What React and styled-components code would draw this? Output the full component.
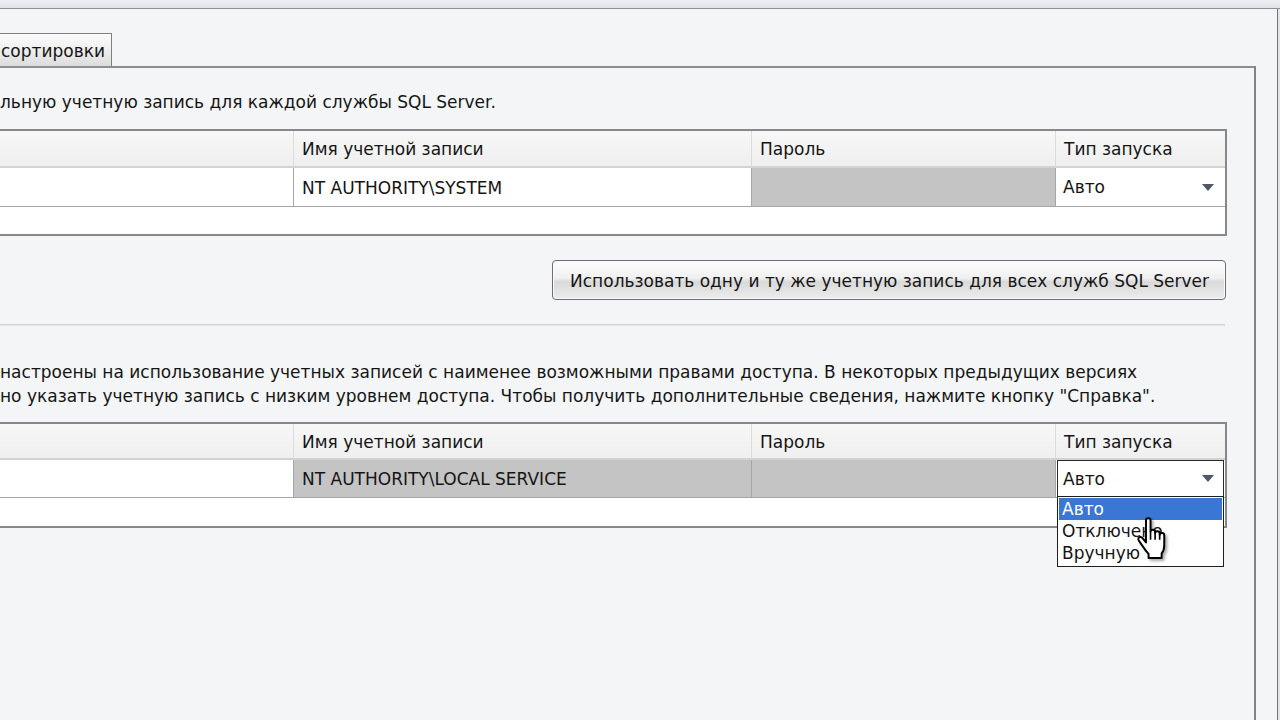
import React from "react";
import styled, { createGlobalStyle } from "styled-components";

const GlobalStyle = createGlobalStyle`
  html, body {
    margin: 0;
    padding: 0;
  }
  body {
    font-family: "DejaVu Sans", "Liberation Sans", sans-serif;
    font-size: 17px;
    color: #151515;
  }
`;

const Screen = styled.div`
  position: relative;
  width: 1280px;
  height: 720px;
  overflow: hidden;
  background: #f4f5f7;
  display: flex;
  flex-direction: column;
`;

const TopEdge = styled.div`
  flex: none;
  height: 8px;
  background: linear-gradient(#eef0f2, #dfe2e6);
  border-bottom: 1px solid #8c9197;
`;

const Body = styled.div`
  flex: 1;
  display: flex;
`;

const Dialog = styled.div`
  width: 1277px;
  border-right: 1px solid #6f747a;
  display: flex;
  flex-direction: column;
  padding-top: 24px;
`;

const Outside = styled.div`
  flex: 1;
  background: #e4e7ea;
`;

const TabStrip = styled.div`
  display: flex;
  height: 33px;
`;

const Tab = styled.div`
  width: 112px;
  box-sizing: border-box;
  display: flex;
  align-items: center;
  padding: 2px 0 0 1px;
  border: 1px solid #7d8186;
  border-left: none;
  border-bottom: none;
  background: linear-gradient(#fbfbfb 0%, #f0f0f0 45%, #dcdcdc 100%);
  white-space: nowrap;
`;

const Panel = styled.div`
  flex: 1;
  width: 1256px;
  box-sizing: border-box;
  border-top: 2px solid #8b8f94;
  border-right: 2px solid #7f8489;
  padding-right: 27px;
  display: flex;
  flex-direction: column;
`;

const Text = styled.div`
  line-height: 24px;
  white-space: nowrap;
  margin-top: ${({ $top }) => $top}px;
`;

const Table = styled.div`
  position: relative;
  margin-top: ${({ $top }) => $top}px;
  background: #fff;
  border: 2px solid #85898e;
  border-left: none;
`;

const Row = styled.div`
  display: grid;
  grid-template-columns: 294px 458px 304px 1fr;
  height: ${({ $h }) => $h}px;
`;

const HeadCell = styled.div`
  display: flex;
  align-items: center;
  padding: 1px 0 0 8px;
  background: linear-gradient(#f7f7f7, #efefef);
  border-right: 1px solid #dcdcdc;
  border-bottom: 2px solid #d2d2d2;
  white-space: nowrap;
  &:last-child {
    border-right: none;
  }
`;

const Cell = styled.div`
  position: relative;
  display: flex;
  align-items: center;
  padding-left: ${({ $pad }) => $pad ?? 8}px;
  padding-top: 1px;
  background: ${({ $gray }) => ($gray ? "#c4c4c4" : "#fff")};
  border-right: 1px solid #a6a6a6;
  border-bottom: 1px solid #a6a6a6;
  white-space: nowrap;
  &:last-child {
    border-right: none;
  }
`;

const Combo = styled.div`
  position: relative;
  flex: 1;
  align-self: stretch;
  display: flex;
  align-items: center;
  justify-content: space-between;
  padding: 0 9px 0 5px;
  margin: -1px 1px 0 1px;
  box-sizing: border-box;
  border: 1px solid ${({ $open }) => ($open ? "#2b2b2b" : "transparent")};
`;

const Arrow = styled.span`
  width: 0;
  height: 0;
  border-left: 6px solid transparent;
  border-right: 6px solid transparent;
  border-top: 7px solid #4f5864;
`;

const List = styled.div`
  position: absolute;
  top: 100%;
  left: 0;
  right: 0;
  margin: 0 -1px;
  height: 71px;
  box-sizing: border-box;
  background: #fff;
  border: 1px solid #1e1e1e;
  padding-top: 1px;
  z-index: 2;
`;

const Option = styled.div`
  height: 22px;
  line-height: 23px;
  padding-left: 3px;
  margin: 0 1px;
  background: ${({ $active }) => ($active ? "#3a77d5" : "transparent")};
  color: ${({ $active }) => ($active ? "#fff" : "#151515")};
`;

const Filler = styled.div`
  height: ${({ $h }) => $h}px;
`;

const ButtonRow = styled.div`
  display: flex;
  justify-content: flex-end;
  margin-top: 24px;
  padding-right: 1px;
`;

const Button = styled.button`
  height: 40px;
  padding: 1px 16px 0 17px;
  font: inherit;
  color: #151515;
  border: 1px solid #6b6e72;
  border-radius: 4px;
  background: linear-gradient(#fdfdfd 0%, #f0f0f0 45%, #d9d9d9 55%, #ececec 100%);
  box-shadow: inset 0 0 0 1px #fbfbfb;
`;

const Separator = styled.div`
  margin-top: 24px;
  height: 2px;
  margin-right: 2px;
  background: linear-gradient(#c9ccd0, #eef0f2);
`;

const Pointer = styled.svg`
  position: absolute;
  left: 1136px;
  top: 517px;
  width: 33px;
  height: 44px;
  filter: drop-shadow(2px 2px 1.5px rgba(0, 0, 0, 0.35));
  z-index: 5;
`;

const columns = ["", "Имя учетной записи", "Пароль", "Тип запуска"];

function AccountTable({ account, accountGray, open, heights, top }) {
  return (
    <Table $top={top}>
      <Row $h={heights[0]}>
        {columns.map((c, i) => (
          <HeadCell key={i}>{c}</HeadCell>
        ))}
      </Row>
      <Row $h={heights[1]}>
        <Cell />
        <Cell $gray={accountGray}>{account}</Cell>
        <Cell $gray />
        <Cell $pad={0}>
          <Combo $open={open}>
            Авто
            <Arrow />
            {open && (
              <List>
                <Option $active>Авто</Option>
                <Option>Отключено</Option>
                <Option>Вручную</Option>
              </List>
            )}
          </Combo>
        </Cell>
      </Row>
      <Filler $h={heights[2]} />
    </Table>
  );
}

function HandCursor() {
  return (
    <Pointer viewBox="0 0 20 27">
      <path
        d="M6 2.2 Q6 0.8 7.4 0.8 Q8.8 0.8 8.8 2.2 L8.8 9 Q8.8 7.8 10.2 7.8 Q11.6 7.8 11.6 9.2 L11.6 10 Q11.6 8.8 13 8.8 Q14.4 8.8 14.4 10.2 L14.4 11 Q14.4 9.8 15.8 9.8 Q17.2 9.8 17.2 11.2 L17.2 17.5 Q17.2 20.5 15.6 22.4 L15.6 25.2 L7.6 25.2 L7.6 22.6 Q5.6 20.6 3.6 17.4 L1.6 14.4 Q0.8 13 2 12.4 Q3 11.9 4 13.1 L6 15.6 Z"
        fill="#fff"
        stroke="#000"
        strokeWidth="1.2"
        strokeLinejoin="round"
      />
      <path d="M8.8 9 L8.8 14 M11.6 10 L11.6 14 M14.4 11 L14.4 14" stroke="#000" strokeWidth="1" fill="none" />
    </Pointer>
  );
}

export default function App() {
  return (
    <Screen>
      <GlobalStyle />
      <TopEdge />
      <Body>
        <Dialog>
          <TabStrip>
            <Tab>сортировки</Tab>
          </TabStrip>
          <Panel>
            <Text $top={22}>льную учетную запись для каждой службы SQL Server.</Text>
            <AccountTable account="NT AUTHORITY\SYSTEM" top={15} heights={[37, 39, 27]} />
            <ButtonRow>
              <Button>Использовать одну и ту же учетную запись для всех служб SQL Server</Button>
            </ButtonRow>
            <Separator />
            <Text $top={34}>
              настроены на использование учетных записей с наименее возможными правами доступа. В некоторых предыдущих версиях
            </Text>
            <Text $top={0}>
              но указать учетную запись с низким уровнем доступа. Чтобы получить дополнительные сведения, нажмите кнопку "Справка".
            </Text>
            <AccountTable
              account="NT AUTHORITY\LOCAL SERVICE"
              accountGray
              open
              top={14}
              heights={[36, 38, 28]}
            />
          </Panel>
        </Dialog>
        <Outside />
      </Body>
      <HandCursor />
    </Screen>
  );
}
